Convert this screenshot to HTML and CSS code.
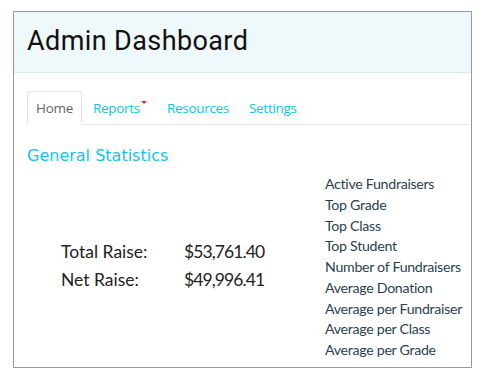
FILE: index.html
```html
<!DOCTYPE html>
<html lang="en">
<head>
    <meta charset="UTF-8">
    <title>Admin Dashboard</title>
    <link rel="stylesheet" href="styles.css">
</head>
<body>
    <div class="panel">
        <div class="header">
            <h1>Admin Dashboard</h1>
        </div>

        <ul class="tabs">
            <li class="active">Home</li>
            <li>Reports<span class="caret"></span></li>
            <li>Resources</li>
            <li>Settings</li>
        </ul>

        <h2>General Statistics</h2>

        <div class="stats">
            <table class="totals">
                <tr><td>Total Raise:</td><td>$53,761.40</td></tr>
                <tr><td>Net Raise:</td><td>$49,996.41</td></tr>
            </table>
            <ul class="links">
                <li>Active Fundraisers</li>
                <li>Top Grade</li>
                <li>Top Class</li>
                <li>Top Student</li>
                <li>Number of Fundraisers</li>
                <li>Average Donation</li>
                <li>Average per Fundraiser</li>
                <li>Average per Class</li>
                <li>Average per Grade</li>
            </ul>
        </div>
    </div>
</body>
</html>
```

FILE: styles.css
```css
body {
    margin: 0;
    padding: 11px 11px 0 13px;
    font-family: Lato, "Open Sans", sans-serif;
    background: #fff;
}
.panel {
    border: 1px solid #999;
    height: 357px;
    box-sizing: border-box;
}
.header {
    background-color: #eff8fa;
    border-bottom: 1px solid #d8edf3;
    height: 61px;
    box-sizing: border-box;
    padding: 13px 0 0 13px;
}
.header h1 {
    margin: 0;
    font-family: Roboto, sans-serif;
    font-weight: normal;
    font-size: 27px;
    letter-spacing: 0.4px;
    color: #111;
}
.tabs {
    list-style: none;
    margin: 18px 3px 0 13px;
    padding: 0;
    display: flex;
    border-bottom: 1px solid #e2e2e2;
    font-family: "Open Sans", sans-serif;
    font-size: 13.5px;
}
.tabs li {
    padding: 7px 8px;
    margin: 0 2px -1px 0;
    color: #14bfe6;
    border: 1px solid transparent;
    letter-spacing: -0.3px;
}
.tabs li.active {
    color: #666;
    border-color: #e2e2e2;
    border-bottom-color: #fff;
    border-radius: 3px 3px 0 0;
    background: #fff;
}
.caret {
    display: inline-block;
    width: 0;
    height: 0;
    border-left: 3px solid transparent;
    border-right: 3px solid transparent;
    border-top: 3px solid #e53030;
    vertical-align: 9px;
    margin-left: 1px;
}
h2 {
    margin: 21px 0 0 13px;
    font-family: "DejaVu Sans", sans-serif;
    font-weight: normal;
    font-size: 16px;
    color: #14c3ea;
}
.stats {
    display: grid;
    grid-template-columns: 311px auto;
    margin-top: 9px;
}
.totals {
    margin: 67px 0 0 47px;
    border-collapse: collapse;
    font-size: 17.5px;
    color: #222;
    align-self: start;
}
.totals td {
    padding: 0 0 7px 0;
}
.totals td:first-child {
    width: 123px;
}
.totals td:last-child {
    letter-spacing: -0.9px;
}
.links {
    list-style: none;
    margin: 0;
    padding: 0;
    font-size: 14.2px;
    color: #2a3f4f;
    letter-spacing: -0.3px;
}
.links li {
    line-height: 20.75px;
}
```
